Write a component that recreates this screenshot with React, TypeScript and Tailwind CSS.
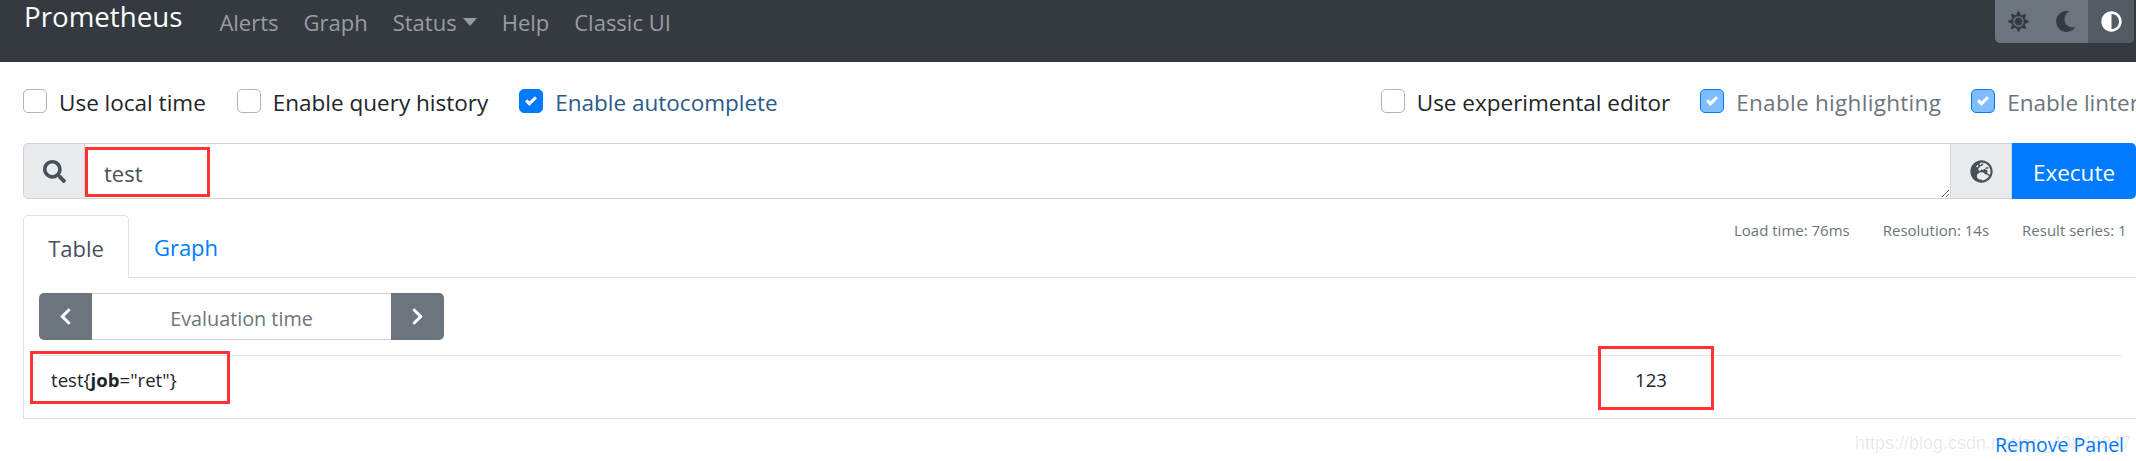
import { FaAdjust, FaChevronLeft, FaChevronRight, FaGlobeEurope, FaMoon, FaSearch, FaSun } from "react-icons/fa";

function Option({
  label,
  checked = false,
  disabled = false,
  textClass = "text-[#212529]",
  className = "",
}: {
  label: string;
  checked?: boolean;
  disabled?: boolean;
  textClass?: string;
  className?: string;
}) {
  const boxClass = checked
    ? disabled
      ? "border-[#007bff] bg-[#80bdff]"
      : "border-[#007bff] bg-[#007bff]"
    : "border-[#adb5bd] bg-white";
  return (
    <label className={`flex shrink-0 items-start gap-[12px] whitespace-nowrap ${className}`}>
      <span className={`flex h-[24px] w-[24px] items-center justify-center rounded-[5px] border ${boxClass}`}>
        {checked && (
          <svg viewBox="0 0 8 8" className="h-[12px] w-[12px]" fill="#fff">
            <path d="M6.564.75l-3.59 3.612-1.538-1.55L0 4.26 2.974 7.25 8 2.193z" />
          </svg>
        )}
      </span>
      <span className={`mt-[2px] text-[22.5px] leading-[24px] ${textClass}`}>{label}</span>
    </label>
  );
}

const navLinks = ["Alerts", "Graph", "Status", "Help", "Classic UI"];

export default function App() {
  return (
    <div className="relative h-[461px] w-[2136px] overflow-hidden bg-white font-['Open_Sans',sans-serif]">
      <nav className="flex h-[62px] items-start bg-[#343a40] pl-[24px]">
        <span className="mt-[1px] text-[27.7px] leading-[30px] text-white">Prometheus</span>
        <div className="ml-[37px] mt-[5px] flex gap-[25px] text-[22px] leading-[34px] text-[#9a9da0]">
          {navLinks.map((link) => (
            <span key={link} className="flex items-center gap-[6px]">
              {link}
              {link === "Status" && (
                <span className="h-0 w-0 border-x-[7px] border-t-[8px] border-x-transparent border-t-[#9a9da0]" />
              )}
            </span>
          ))}
        </div>
        <div className="ml-auto mr-[2px] flex h-[43px] w-[139px] overflow-hidden rounded-b-[5px] bg-[#6c757d]">
          <span className="flex w-[47px] items-center justify-center text-[#343a40]">
            <FaSun size={21} />
          </span>
          <span className="flex w-[46px] items-center justify-center text-[#343a40]">
            <FaMoon size={21} />
          </span>
          <span className="flex w-[46px] items-center justify-center bg-[#545b62] text-white">
            <FaAdjust size={21} />
          </span>
        </div>
      </nav>

      <div className="flex pl-[23px] pt-[27px]">
        <Option label="Use local time" />
        <Option label="Enable query history" className="ml-[31px]" />
        <Option label="Enable autocomplete" checked textClass="text-[#2a5a8c]" className="ml-[31px]" />
        <Option label="Use experimental editor" className="ml-[603px]" />
        <Option
          label="Enable highlighting"
          checked
          disabled
          textClass="text-[#6c757d] tracking-[0.3px]"
          className="ml-[30px]"
        />
        <Option label="Enable linter" checked disabled textClass="text-[#6c757d]" className="ml-[30px]" />
      </div>

      <div className="ml-[23px] mt-[28px] flex h-[56px]">
        <span className="flex w-[62px] items-center justify-center rounded-l-[5px] border border-[#ced4da] bg-[#e9ecef] text-[#495057]">
          <FaSearch size={23} />
        </span>
        <textarea
          defaultValue="test"
          className="min-w-0 flex-1 border-y border-[#ced4da] px-[19px] pb-[9px] pt-[13px] text-[22px] leading-[32px] text-[#495057] outline-none"
        />
        <span className="flex w-[62px] items-center justify-center border border-[#ced4da] bg-[#e9ecef] text-[#495057]">
          <FaGlobeEurope size={23} />
        </span>
        <button type="button" className="w-[124px] rounded-r-[5px] bg-[#007bff] pt-[3px] text-[22.5px] text-white">
          Execute
        </button>
      </div>

      <div className="ml-[23px] mt-[16px]">
        <div className="flex h-[63px] border-b border-[#dee2e6]">
          <span className="-mb-px flex h-[63px] w-[106px] items-center justify-center rounded-t-[5px] border border-[#dee2e6] border-b-white pt-[3px] text-[22px] text-[#495057]">
            Table
          </span>
          <span className="flex w-[114px] items-center justify-center pt-[3px] text-[22px] text-[#007bff]">Graph</span>
          <div className="ml-[1491px] mt-[4px] flex gap-[33px] whitespace-nowrap text-[15px] leading-[22px] text-[#6c757d]">
            <span>Load time: 76ms</span>
            <span>Resolution: 14s</span>
            <span>Result series: 1</span>
          </div>
        </div>

        <div className="h-[141px] border-b border-l border-[#dee2e6] pl-[15px] pt-[15px]">
          <div className="flex h-[47px] w-[405px]">
            <span className="flex w-[53px] items-center justify-center rounded-l-[5px] bg-[#6c757d] text-white">
              <FaChevronLeft size={19} />
            </span>
            <span className="flex flex-1 items-center justify-center border-y border-[#ced4da] pt-[4px] text-[19.8px] text-[#6c757d]">
              Evaluation time
            </span>
            <span className="flex w-[53px] items-center justify-center rounded-r-[5px] bg-[#6c757d] text-white">
              <FaChevronRight size={19} />
            </span>
          </div>
          <div className="mt-[15px] flex h-[62px] w-[2082px] items-start border-t border-[#dee2e6] pl-[12px] pt-[11px] text-[18.6px] leading-[26px] text-[#212529]">
            <span className="w-[1584px]">
              test{"{"}
              <b>job</b>="ret"{"}"}
            </span>
            <span>123</span>
          </div>
        </div>

        <div className="flex justify-end pr-[12px] pt-[11px] text-[19.5px] leading-[30px] text-[#007bff]">Remove Panel</div>
      </div>

      {/* annotations and watermark sit on top of the screenshot */}
      <div className="absolute left-[85px] top-[147px] h-[50px] w-[125px] border-[3px] border-[#ff3333]" />
      <div className="absolute left-[30px] top-[351px] h-[53px] w-[200px] border-[3px] border-[#ff3333]" />
      <div className="absolute left-[1598px] top-[346px] h-[64px] w-[116px] border-[3px] border-[#ff3333]" />
      <span className="absolute left-[1855px] top-[431px] whitespace-nowrap font-['Liberation_Sans',sans-serif] text-[18px] leading-[24px] text-black/10">
        https://blog.csdn.net/qq_43843847
      </span>
    </div>
  );
}
